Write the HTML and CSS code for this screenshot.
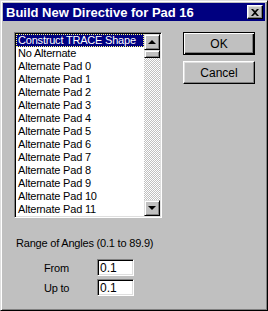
FILE: index.html
```html
<!DOCTYPE html>
<html lang="en">
<head>
    <meta charset="UTF-8">
    <title>Build New Directive for Pad 16</title>
    <link rel="stylesheet" href="styles.css">
</head>
<body>
    <div class="dialog">
        <div class="titlebar">
            <span class="title">Build New Directive for Pad 16</span>
            <button class="close" aria-label="Close">
                <svg width="8" height="7" viewBox="0 0 8 7"><path d="M0 0h2l2 2 2-2h2L5 3.5 8 7H6L4 5 2 7H0l3-3.5z" fill="#000"/></svg>
            </button>
        </div>
        <div class="content">
            <div class="top-row">
                <div class="listbox">
                    <ul class="items">
                        <li class="selected">Construct TRACE Shape</li>
                        <li>No Alternate</li>
                        <li>Alternate Pad 0</li>
                        <li>Alternate Pad 1</li>
                        <li>Alternate Pad 2</li>
                        <li>Alternate Pad 3</li>
                        <li>Alternate Pad 4</li>
                        <li>Alternate Pad 5</li>
                        <li>Alternate Pad 6</li>
                        <li>Alternate Pad 7</li>
                        <li>Alternate Pad 8</li>
                        <li>Alternate Pad 9</li>
                        <li>Alternate Pad 10</li>
                        <li>Alternate Pad 11</li>
                    </ul>
                    <div class="scrollbar">
                        <div class="raised arrow"><span class="tri up"></span></div>
                        <div class="raised thumb"></div>
                        <div class="track"></div>
                        <div class="raised arrow"><span class="tri down"></span></div>
                    </div>
                </div>
                <div class="actions">
                    <button class="btn default">OK</button>
                    <button class="btn">Cancel</button>
                </div>
            </div>
            <div class="range">
                <p class="range-label">Range of Angles (0.1 to 89.9)</p>
                <div class="field">
                    <label>From</label>
                    <input type="text" value="0.1">
                </div>
                <div class="field">
                    <label>Up to</label>
                    <input type="text" value="0.1">
                </div>
            </div>
        </div>
    </div>
</body>
</html>
```

FILE: styles.css
```css
* {
    margin: 0;
    padding: 0;
    box-sizing: border-box;
}

body {
    font-family: 'Liberation Sans', Arial, sans-serif;
    font-size: 11px;
    letter-spacing: -0.2px;
    color: #000;
    background: #c0c0c0;
}

.dialog {
    width: 268px;
    height: 311px;
    background: #c0c0c0;
    border: 1px solid;
    border-color: #dfdfdf #000 #000 #dfdfdf;
    box-shadow: inset 1px 1px #fff, inset -1px -1px #808080;
    padding: 2px;
    display: flex;
    flex-direction: column;
}

.titlebar {
    height: 18px;
    background: #000080;
    display: flex;
    align-items: center;
    padding: 0 2px 0 3px;
}

.title {
    flex: 1;
    color: #fff;
    font-weight: bold;
    font-size: 13px;
    letter-spacing: 0;
    line-height: 15px;
}

.close {
    width: 16px;
    height: 14px;
    display: flex;
    align-items: center;
    justify-content: center;
    background: #c0c0c0;
    border: 1px solid;
    border-color: #fff #000 #000 #fff;
    box-shadow: inset -1px -1px #808080, inset 1px 1px #dfdfdf;
}

.content {
    flex: 1;
    padding: 11px 0 0 11px;
}

.top-row {
    display: flex;
    align-items: flex-start;
}

.listbox {
    width: 148px;
    height: 186px;
    display: flex;
    background: #fff;
    border: 1px solid;
    border-color: #808080 #fff #fff #808080;
    box-shadow: inset 1px 1px #000, inset -1px -1px #dfdfdf;
    padding: 1px;
}

.items {
    list-style: none;
    flex: 1;
}

.items li {
    height: 13px;
    line-height: 13px;
    padding-left: 2px;
    white-space: nowrap;
}

.items .selected {
    background: #000080;
    color: #fff;
    outline: 1px dotted #ffff80;
    outline-offset: -1px;
}

.scrollbar {
    width: 16px;
    display: flex;
    flex-direction: column;
}

.raised {
    background: #c0c0c0;
    border: 1px solid;
    border-color: #dfdfdf #000 #000 #dfdfdf;
    box-shadow: inset 1px 1px #fff, inset -1px -1px #808080;
}

.arrow {
    height: 16px;
    display: flex;
    align-items: center;
    justify-content: center;
}

.thumb {
    height: 8px;
}

.track {
    flex: 1;
    background: repeating-conic-gradient(#c0c0c0 0 25%, #fff 0 50%) 0 0 / 2px 2px;
}

.tri {
    width: 0;
    height: 0;
    border-left: 4px solid transparent;
    border-right: 4px solid transparent;
}

.tri.up {
    border-bottom: 4px solid #000;
}

.tri.down {
    border-top: 4px solid #000;
}

.actions {
    margin-left: 21px;
    display: flex;
    flex-direction: column;
    gap: 6px;
}

.btn {
    width: 72px;
    height: 23px;
    font-family: inherit;
    font-size: 12px;
    letter-spacing: 0;
    color: #000;
    background: #c0c0c0;
    border: 1px solid;
    border-color: #fff #000 #000 #fff;
    box-shadow: inset -1px -1px #808080, inset 1px 1px #dfdfdf;
}

.btn.default {
    border: 1px solid #000;
    box-shadow: inset 1px 1px #fff, inset -1px -1px #000, inset -2px -2px #808080;
}

.range {
    margin-top: 19px;
    padding-left: 2px;
}

.range-label {
    line-height: 13px;
}

.field {
    display: flex;
    align-items: center;
    height: 17px;
    margin-top: 3px;
    padding-left: 28px;
}

.range-label + .field {
    margin-top: 9px;
}

.field label {
    width: 53px;
}

.field input {
    width: 37px;
    height: 17px;
    font-family: inherit;
    font-size: 12px;
    letter-spacing: 0;
    padding-left: 2px;
    background: #fff;
    border: 1px solid;
    border-color: #808080 #fff #fff #808080;
    box-shadow: inset 1px 1px #000, inset -1px -1px #dfdfdf;
    outline: none;
}
```
